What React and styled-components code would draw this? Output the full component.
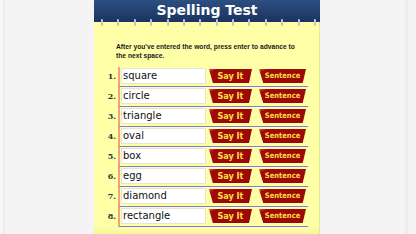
import React from "react";
import styled, { createGlobalStyle } from "styled-components";

const GlobalStyle = createGlobalStyle`
  html, body {
    margin: 0;
    padding: 0;
    background: #f4f4f4;
  }
`;

const Page = styled.div`
  display: flex;
  height: 234px;
  overflow: hidden;
  background: #f4f4f4;
  border-left: 3px solid #f7f7f7;
  box-shadow: inset 2px 0 0 #ececec;
  padding-left: 91px;
  position: relative;
  box-sizing: border-box;
  &::after {
    content: "";
    position: absolute;
    right: 8px;
    top: 0;
    bottom: 0;
    width: 3px;
    background: #ededed;
  }
`;

const Panel = styled.div`
  width: 226px;
  display: flex;
  flex-direction: column;
  background: linear-gradient(#ffffa8 96%, #f6f69c);
  box-shadow: inset -1px 0 0 #e8e890;
  position: relative;
`;

const Header = styled.div`
  height: 22px;
  background: linear-gradient(#2d4f82, #1b335e);
  display: flex;
  justify-content: center;
  align-items: center;
`;

const Title = styled.h1`
  margin: 0;
  font-family: "DejaVu Sans", Verdana, sans-serif;
  font-weight: bold;
  font-size: 14px;
  color: #fff;
  line-height: 18px;
  margin-top: -2px;
`;

const Rings = styled.div`
  position: absolute;
  top: 19px;
  left: 7px;
  right: 4px;
  display: flex;
  justify-content: space-between;
`;

const Ring = styled.span`
  width: 2px;
  height: 7px;
  border-radius: 1px;
  background: linear-gradient(90deg, #9aa3b8, #eef1f7, #8a93a8);
`;

const Note = styled.p`
  margin: 20px 0 0 22px;
  font-family: "Liberation Sans", Arial, sans-serif;
  font-weight: bold;
  font-size: 6.7px;
  line-height: 9px;
  color: #1a1a1a;
  white-space: nowrap;
`;

const List = styled.div`
  margin-top: 7px;
  display: flex;
  flex-direction: column;
`;

const Row = styled.div`
  display: flex;
  height: 20px;
`;

const Num = styled.span`
  width: 22px;
  padding-right: 2px;
  text-align: right;
  font-family: "DejaVu Serif", Georgia, serif;
  font-weight: bold;
  font-size: 8px;
  line-height: 18px;
  color: #333;
`;

const Line = styled.div`
  display: flex;
  align-items: flex-start;
  width: 190px;
  height: 20px;
  box-sizing: border-box;
  border-left: 2px solid #f7a080;
  border-bottom: 1px solid #7b7be6;
  padding: 1px 0 0 1px;
`;

const Word = styled.div`
  width: 85px;
  height: 16px;
  box-sizing: border-box;
  background: #fff;
  border: 1px solid #e6e6d0;
  font-family: "DejaVu Sans", Verdana, sans-serif;
  font-size: 10px;
  line-height: 13px;
  padding-left: 1px;
  color: #111;
`;

const Tab = styled.button`
  border: 0;
  padding: 0;
  margin-left: ${(p) => p.$gap}px;
  width: ${(p) => p.$w}px;
  height: 14px;
  margin-top: 1px;
  clip-path: polygon(0 0, 100% 0, 93% 100%, 9% 100%);
  background: linear-gradient(160deg, #d06060 0, #a00a0a 12%, #9a0606 100%);
  color: #ffe040;
  font-family: "DejaVu Sans Condensed", "DejaVu Sans", sans-serif;
  font-stretch: condensed;
  font-weight: bold;
  font-size: ${(p) => p.$size}px;
  line-height: 14px;
  text-align: center;
  cursor: pointer;
`;

const words = ["square", "circle", "triangle", "oval", "box", "egg", "diamond", "rectangle"];

export default function App() {
  return (
    <>
      <GlobalStyle />
      <Page>
        <Panel>
          <Header>
            <Title>Spelling Test</Title>
          </Header>
          <Rings>
            {Array.from({ length: 14 }).map((_, i) => (
              <Ring key={i} />
            ))}
          </Rings>
          <Note>
            After you've entered the word, press enter to advance to
            <br />
            the next space.
          </Note>
          <List>
            {words.map((w, i) => (
              <Row key={w}>
                <Num>{i + 1}.</Num>
                <Line>
                  <Word>{w}</Word>
                  <Tab $gap={3} $w={43} $size={9}>Say It</Tab>
                  <Tab $gap={7} $w={47} $size={7.5}>Sentence</Tab>
                </Line>
              </Row>
            ))}
          </List>
        </Panel>
      </Page>
    </>
  );
}
